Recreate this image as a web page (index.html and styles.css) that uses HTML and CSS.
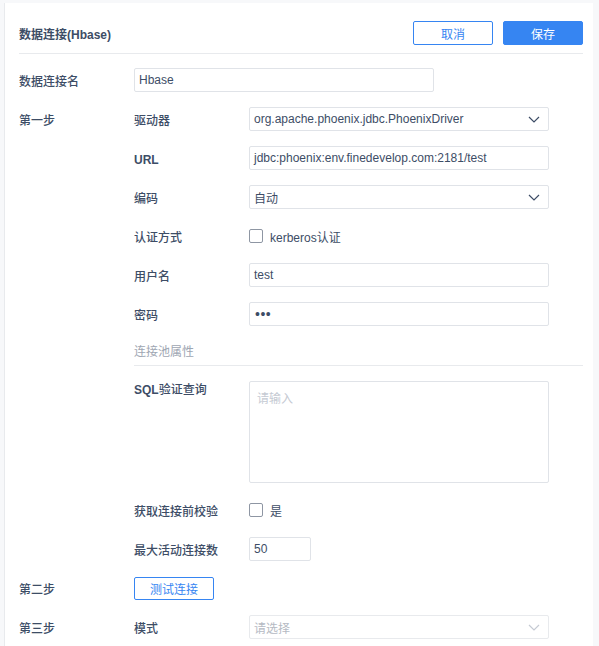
FILE: index.html
```html
<!DOCTYPE html>
<html lang="zh">
<head>
<meta charset="utf-8">
<link rel="stylesheet" href="styles.css">
</head>
<body>
<div class="panel">
  <div class="header">
    <div class="title">数据连接(Hbase)</div>
    <div class="actions">
      <button class="btn btn-ghost">取消</button>
      <button class="btn btn-primary">保存</button>
    </div>
  </div>

  <div class="form">
    <div class="row">
      <div class="step">数据连接名</div>
      <div class="field"><div class="input wide">Hbase</div></div>
    </div>

    <div class="group">
      <div class="step">第一步</div>
      <div class="items">
        <div class="row">
          <div class="label">驱动器</div>
          <div class="select input">
            <span>org.apache.phoenix.jdbc.PhoenixDriver</span>
            <svg class="chev" width="12" height="7" viewBox="0 0 12 7"><path d="M1 1l5 5 5-5" fill="none" stroke="#3d4d66" stroke-width="1.2"/></svg>
          </div>
        </div>
        <div class="row">
          <div class="label bold">URL</div>
          <div class="input">jdbc:phoenix:env.finedevelop.com:2181/test</div>
        </div>
        <div class="row">
          <div class="label">编码</div>
          <div class="select input">
            <span>自动</span>
            <svg class="chev" width="12" height="7" viewBox="0 0 12 7"><path d="M1 1l5 5 5-5" fill="none" stroke="#3d4d66" stroke-width="1.2"/></svg>
          </div>
        </div>
        <div class="row">
          <div class="label">认证方式</div>
          <div class="check"><span class="box"></span><span>kerberos认证</span></div>
        </div>
        <div class="row">
          <div class="label">用户名</div>
          <div class="input">test</div>
        </div>
        <div class="row">
          <div class="label">密码</div>
          <div class="input dots">•••</div>
        </div>
        <div class="section">连接池属性</div>
        <div class="row top">
          <div class="label"><span class="bold">SQL</span>验证查询</div>
          <div class="textarea">请输入</div>
        </div>
        <div class="row">
          <div class="label">获取连接前校验</div>
          <div class="check"><span class="box"></span><span>是</span></div>
        </div>
        <div class="row">
          <div class="label">最大活动连接数</div>
          <div class="input small">50</div>
        </div>
      </div>
    </div>

    <div class="row">
      <div class="step">第二步</div>
      <button class="btn btn-ghost btn-test">测试连接</button>
    </div>

    <div class="group">
      <div class="step">第三步</div>
      <div class="items">
        <div class="row">
          <div class="label">模式</div>
          <div class="select input disabled">
            <span>请选择</span>
            <svg class="chev" width="12" height="7" viewBox="0 0 12 7"><path d="M1 1l5 5 5-5" fill="none" stroke="#c5cad3" stroke-width="1.2"/></svg>
          </div>
        </div>
      </div>
    </div>
  </div>
</div>
</body>
</html>
```

FILE: styles.css
```css
* { box-sizing: border-box; }
html, body { margin: 0; padding: 0; }
body {
  background: #f7f8fa;
  font-family: "Liberation Sans", "Noto Sans CJK SC", sans-serif;
  font-size: 12px;
  color: #3d4d66;
  height: 646px;
  overflow: hidden;
}
.panel {
  margin: 3px 6px 0 4px;
  background: #fff;
  border-left: 1px solid #e8eaed;
  padding: 0 10px 0 14px;
  height: 643px;
}
.header {
  display: flex;
  align-items: center;
  justify-content: space-between;
  padding: 18px 0 8px;
  border-bottom: 1px solid #e8eaed;
}
.title { font-weight: bold; }
.actions { display: flex; gap: 10px; }
.btn {
  font-family: inherit;
  font-size: 12px;
  height: 24px;
  width: 80px;
  border-radius: 2px;
  padding: 0;
  cursor: pointer;
}
.btn-ghost { background: #fff; border: 1px solid #3685f2; color: #3685f2; }
.btn-primary { background: #3685f2; border: 1px solid #3685f2; color: #fff; }
.btn-test { width: 80px; height: 23px; margin-top: 1px; }

.form {
  display: flex;
  flex-direction: column;
  gap: 15px;
  padding-top: 14px;
}
.group { display: flex; }
.group > .step { height: 24px; padding-top: 6px; }
.items {
  display: flex;
  flex-direction: column;
  gap: 15px;
}
.row {
  display: flex;
  align-items: center;
  min-height: 24px;
}
.row.top { align-items: flex-start; }
.step { width: 115px; flex: none; font-weight: 500; line-height: 16px; padding-top: 3px; }
.label { width: 115px; flex: none; font-weight: 500; line-height: 16px; padding-top: 3px; }
.bold { font-weight: bold; }
.row.top .label { padding-top: 1px; }
.input {
  width: 300px;
  height: 24px;
  border: 1px solid #e0e3e8;
  border-radius: 2px;
  padding: 0 4px;
  display: flex;
  align-items: center;
  background: #fff;
}
.input.small { width: 62px; }
.dots { font-size: 14px; letter-spacing: 0.5px; padding-left: 5px; }
.select { justify-content: space-between; padding-right: 8px; }
.select.disabled { color: #b5bac3; border-color: #e8eaed; }
.chev { flex: none; }
.check { display: flex; align-items: center; gap: 7px; }
.box {
  width: 14px;
  height: 14px;
  border: 1px solid #8e96a3;
  border-radius: 2px;
  background: #fff;
}
.section {
  width: 449px;
  color: #9ea6b2;
  height: 26px;
  line-height: 24px;
  border-bottom: 1px solid #e8eaed;
  margin-top: -1px;
}
.textarea {
  width: 300px;
  height: 102px;
  border: 1px solid #e0e3e8;
  border-radius: 2px;
  padding: 7px 7px;
  color: #c5cad3;
}
```
